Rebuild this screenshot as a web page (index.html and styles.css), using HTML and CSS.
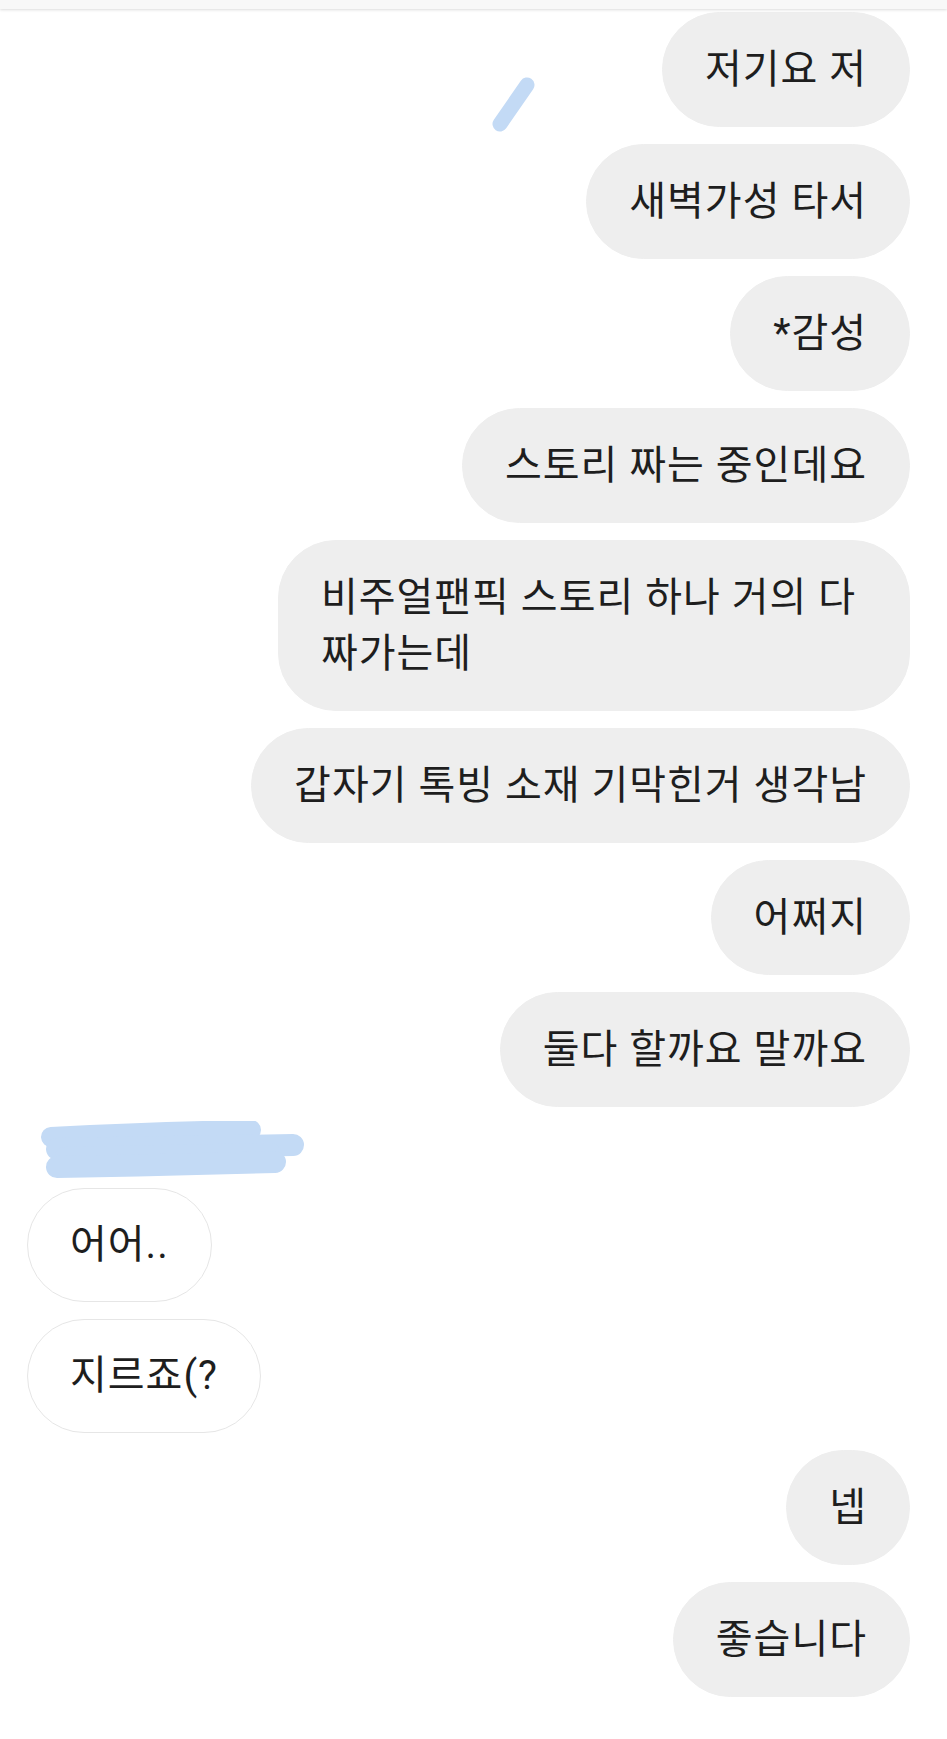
FILE: index.html
```html
<!DOCTYPE html>
<html lang="ko">

<head>
    <meta charset="UTF-8">
    <meta name="viewport" content="width=device-width, initial-scale=1.0">
    <title>채팅</title>
    <link rel="stylesheet" href="styles.css">
</head>

<body>
    <header class="topbar"></header>

    <!-- 가림 낙서 -->
    <svg class="mark" width="60" height="70" viewBox="0 0 60 70">
        <path d="M41 17 L14 56" stroke="#c3daf5" stroke-width="15" stroke-linecap="round" fill="none" />
    </svg>

    <main class="chat">
        <div class="msg mine"><div class="bubble">저기요 저</div></div>
        <div class="msg mine"><div class="bubble">새벽가성 타서</div></div>
        <div class="msg mine"><div class="bubble">*감성</div></div>
        <div class="msg mine"><div class="bubble">스토리 짜는 중인데요</div></div>
        <div class="msg mine"><div class="bubble multi">비주얼팬픽 스토리 하나 거의 다<br>짜가는데</div></div>
        <div class="msg mine"><div class="bubble">갑자기 톡빙 소재 기막힌거 생각남</div></div>
        <div class="msg mine"><div class="bubble">어쩌지</div></div>
        <div class="msg mine"><div class="bubble">둘다 할까요 말까요</div></div>

        <div class="sender">
            <svg width="270" height="62" viewBox="0 0 270 62">
                <g stroke="#c3daf5" stroke-linecap="round" fill="none">
                    <path d="M12 16 C 70 13, 150 10, 212 9" stroke-width="20" />
                    <path d="M18 28 C 90 27, 180 25, 254 24" stroke-width="22" />
                    <path d="M26 36 C 100 35, 160 33, 232 32" stroke-width="20" />
                    <path d="M18 46 C 90 45, 170 43, 236 41" stroke-width="22" />
                </g>
            </svg>
        </div>
        <div class="msg theirs"><div class="bubble">어어..</div></div>
        <div class="msg theirs"><div class="bubble">지르죠(?</div></div>

        <div class="msg mine"><div class="bubble">넵</div></div>
        <div class="msg mine"><div class="bubble">좋습니다</div></div>
    </main>
</body>

</html>
```

FILE: styles.css
```css
body {
    margin: 0;
    padding: 0;
    background-color: #fff;
    font-family: Roboto, "Noto Sans CJK KR", sans-serif;
    color: #1e1e1e;
    position: relative;
}

.topbar {
    height: 9px;
    background-color: #f8f8f8;
    box-shadow: 0 1px 3px rgba(0, 0, 0, 0.14);
    position: relative;
    z-index: 2;
}

.mark {
    position: absolute;
    left: 486px;
    top: 68px;
}

.chat {
    display: flex;
    flex-direction: column;
    padding: 3px 37px 40px 27px;
}

.msg {
    display: flex;
    margin-top: 17px;
}

.msg:first-child {
    margin-top: 0;
}

.mine {
    justify-content: flex-end;
}

.theirs {
    justify-content: flex-start;
}

.bubble {
    font-size: 40px;
    line-height: 56px;
    letter-spacing: 1px;
    padding: 28.5px 42px;
    border-radius: 58px;
    border: 1px solid #eeeeee;
    background-color: #eeeeee;
    max-width: 640px;
}

.bubble.multi {
    padding-right: 53px;
}

.theirs .bubble {
    background-color: #fff;
    border: 1.5px solid #e6e6e6;
    padding: 28px 42px;
}

.sender {
    margin-top: 14px;
    height: 62px;
    margin-left: 12px;
}

.sender svg {
    display: block;
}

.sender + .msg {
    margin-top: 5px;
}
```
